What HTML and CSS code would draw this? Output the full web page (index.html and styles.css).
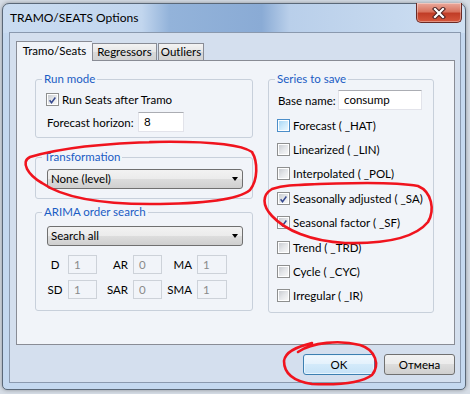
FILE: index.html
```html
<!DOCTYPE html>
<html>
<head>
<meta charset="utf-8">
<title>TRAMO/SEATS Options</title>
<link rel="stylesheet" href="styles.css">
</head>
<body>
<div class="window">
    <div class="titlebar">
        <span class="title">TRAMO/SEATS Options</span>
        <span class="close">
            <svg width="14" height="12" viewBox="0 0 14 12">
                <path d="M3 2 L11 10 M11 2 L3 10" stroke="#4a2020" stroke-width="4.2" stroke-linecap="square"/>
                <path d="M3 2 L11 10 M11 2 L3 10" stroke="#ffffff" stroke-width="2.2" stroke-linecap="square"/>
            </svg>
        </span>
    </div>

    <div class="client">
        <div class="tabs">
            <span class="tab active">Tramo/Seats</span>
            <span class="tab t-reg">Regressors</span>
            <span class="tab t-out">Outliers</span>
        </div>

        <div class="panel">
            <div class="col-left">
                <fieldset class="grp">
                    <legend>Run mode</legend>
                    <div class="gbody run-mode">
                        <div class="chk-row">
                            <span class="chk">
                                <svg width="11" height="11" viewBox="0 0 11 11"><path d="M2 5.2 L4.3 8.3 L9 1.8" fill="none" stroke="#34478f" stroke-width="1.8"/></svg>
                            </span>
                            Run Seats after Tramo
                        </div>
                        <div class="fld-row">
                            <span>Forecast horizon:</span>
                            <span class="edit horizon">8</span>
                        </div>
                    </div>
                </fieldset>

                <fieldset class="grp transform">
                    <legend>Transformation</legend>
                    <div class="gbody">
                        <div class="combo">None (level)<span class="arrow"></span></div>
                    </div>
                </fieldset>

                <fieldset class="grp arima">
                    <legend>ARIMA order search</legend>
                    <div class="gbody">
                        <div class="combo">Search all<span class="arrow"></span></div>
                        <div class="orders">
                            <span class="lbl first">D</span><span class="edit off">1</span>
                            <span class="lbl">AR</span><span class="edit off">0</span>
                            <span class="lbl">MA</span><span class="edit off">1</span>
                            <span class="lbl first">SD</span><span class="edit off">1</span>
                            <span class="lbl">SAR</span><span class="edit off">0</span>
                            <span class="lbl">SMA</span><span class="edit off">1</span>
                        </div>
                    </div>
                </fieldset>
            </div>

            <fieldset class="grp series">
                <legend>Series to save</legend>
                <div class="gbody">
                    <div class="fld-row base">
                        <span>Base name:</span>
                        <span class="edit basename">consump</span>
                    </div>
                    <div class="chk-list">
                        <div class="chk-row"><span class="chk hover"></span>Forecast ( _HAT)</div>
                        <div class="chk-row"><span class="chk"></span>Linearized ( _LIN)</div>
                        <div class="chk-row"><span class="chk"></span>Interpolated ( _POL)</div>
                        <div class="chk-row">
                            <span class="chk"><svg width="11" height="11" viewBox="0 0 11 11"><path d="M2 5.2 L4.3 8.3 L9 1.8" fill="none" stroke="#34478f" stroke-width="1.8"/></svg></span>
                            Seasonally adjusted ( _SA)
                        </div>
                        <div class="chk-row">
                            <span class="chk"><svg width="11" height="11" viewBox="0 0 11 11"><path d="M2 5.2 L4.3 8.3 L9 1.8" fill="none" stroke="#34478f" stroke-width="1.8"/></svg></span>
                            Seasonal factor ( _SF)
                        </div>
                        <div class="chk-row"><span class="chk"></span>Trend ( _TRD)</div>
                        <div class="chk-row"><span class="chk"></span>Cycle ( _CYC)</div>
                        <div class="chk-row"><span class="chk"></span>Irregular ( _IR)</div>
                    </div>
                </div>
            </fieldset>
        </div>

        <div class="buttons">
            <span class="btn default">OK</span>
            <span class="btn">Отмена</span>
        </div>
    </div>
</div>

<!-- hand drawn red marks over the dialog -->
<svg class="marks" width="470" height="394" viewBox="0 0 470 394">
    <path d="M160 142 C 110 143 60 148 30 157 C 20 162 28 175 42 183 C 62 197 100 204 150 204 C 200 204 238 200 250 190 C 258 180 258 162 252 152 C 240 144 200 141 150 142"
          fill="none" stroke="#f0141e" stroke-width="2.6" stroke-linecap="round"/>
    <path d="M300 185 C 340 183 390 181 418 186 C 432 192 435 210 428 222 C 415 238 385 244 345 243 C 310 241 285 230 272 216 C 262 205 262 195 272 189 C 285 185 295 185 320 184"
          fill="none" stroke="#f0141e" stroke-width="2.6" stroke-linecap="round"/>
    <path d="M298 352 C 312 342 340 340 360 345 C 376 350 380 365 372 375 C 360 384 335 385 312 384 C 292 381 284 372 284 361 C 285 352 296 347 312 343"
          fill="none" stroke="#f0141e" stroke-width="2.6" stroke-linecap="round"/>
</svg>
</body>
</html>
```

FILE: styles.css
```css
* {
    box-sizing: border-box;
}

body {
    margin: 0;
    width: 470px;
    height: 394px;
    overflow: hidden;
    position: relative;
    background: #d6dde6;
    font-family: Lato, "Noto Sans", sans-serif;
    font-size: 11.5px;
    color: #000;
}

.window {
    margin: 3px 0 0 2px;
    width: 464px;
    height: 387px;
    border: 1px solid #5a6878;
    border-radius: 7px 7px 5px 5px;
    padding: 0 4px 6px 6px;
    display: flex;
    flex-direction: column;
    background:
        linear-gradient(to right, #cadcf1 0, #c2d6ee 30%, #93b3da 36%, #8aabd5 56%, #b9cfea 62%, #c6d9ef 85%, #cfe0f2 100%) top / 100% 29px no-repeat,
        #c4d8ef;
    box-shadow: 0 0 4px rgba(0, 0, 0, 0.35);
}

.titlebar {
    height: 28px;
    display: flex;
    align-items: flex-start;
}

.title {
    margin: 6px 0 0 1px;
    line-height: 16px;
    font-size: 12px;
}

.close {
    margin: -1px -1px 0 auto;
    width: 46px;
    height: 20px;
    border: 1px solid #6a2a25;
    border-top: none;
    border-radius: 0 0 5px 5px;
    background: linear-gradient(#eaa99c 0, #d9745f 45%, #c13d27 55%, #d6573c 100%);
    display: flex;
    align-items: center;
    justify-content: center;
    box-shadow: inset 0 0 0 1px rgba(255, 255, 255, 0.35);
}

.client {
    flex: 1;
    border: 1px solid #8a99ae;
    background: #d4dfee;
    padding: 8px 5px 0 6px;
    display: flex;
    flex-direction: column;
}

/* tabs */
.tabs {
    height: 20px;
    margin-bottom: -1px;
    display: flex;
    align-items: flex-end;
    position: relative;
    z-index: 1;
}

.tab {
    height: 17px;
    margin-bottom: 1px;
    border: 1px solid #898c95;
    border-bottom: none;
    background: linear-gradient(#f3f3f3, #e6e6e6 50%, #d9d9d9 50%, #d3d3d3);
    display: flex;
    align-items: center;
    justify-content: center;
    line-height: 14px;
}

.tab.active {
    width: 76px;
    height: 20px;
    margin-bottom: 0;
    background: #f1f4f9;
    border-right: none;
    padding-bottom: 1px;
}

.t-reg {
    width: 65px;
}

.t-out {
    width: 46px;
    margin-left: 1px;
}

.panel {
    height: 285px;
    border: 1px solid #898c95;
    background: #f1f4f9;
    padding: 10px 0 0 18px;
    display: flex;
    gap: 15px;
}

/* group boxes */
.grp {
    margin: 0;
    padding: 0;
    border: 1px solid #c8d0db;
    border-radius: 3px;
    min-width: 0;
}

.grp legend {
    margin-left: 6px;
    padding: 0 2px;
    line-height: 16px;
    color: #1a5cc4;
}

.col-left {
    width: 218px;
    display: flex;
    flex-direction: column;
}

.gbody {
    padding: 6px 9px 11px 11px;
}

.gbody.run-mode {
    padding: 5px 0 5px 10px;
}

.transform {
    margin-top: 11px;
}

.transform .gbody {
    padding: 4px 9px 9px 11px;
}

.arima {
    margin-top: 5px;
}

.series {
    width: 166px;
    height: 242px;
}

.series .gbody {
    padding: 3px 0 0 8px;
}

/* rows */
.chk-row {
    display: flex;
    align-items: center;
    gap: 3px;
    line-height: 15px;
    white-space: nowrap;
}

.fld-row {
    display: flex;
    align-items: center;
    margin-top: 5px;
    padding-left: 1px;
    white-space: nowrap;
}

.fld-row.base {
    margin-top: 0;
    padding-left: 1px;
}

.chk-list {
    margin-top: 3px;
}

.chk-list .chk-row {
    height: 24.4px;
}

.chk {
    width: 13px;
    height: 13px;
    flex: none;
    border: 1px solid #8e8f8f;
    padding: 1px;
    display: flex;
    background-color: #fff;
    background-image: linear-gradient(135deg, #c9ccd1 0, #e4e6e9 50%, #f7f7f7 100%);
    background-size: 9px 9px;
    background-position: 1px 1px;
    background-repeat: no-repeat;
}

.chk.hover {
    border-color: #4c8ec9;
    background-image: linear-gradient(135deg, #a9d8f6 0, #cbe9fb 50%, #eaf7fe 100%);
}

.edit {
    height: 20px;
    border: 1px solid #e2e3ea;
    border-top-color: #abadb3;
    background: #fff;
    padding-left: 5px;
    line-height: 18px;
}

.horizon {
    width: 46px;
    margin-left: auto;
    margin-right: 68px;
}

.basename {
    width: 84px;
    margin-left: auto;
    margin-right: 11px;
}

.combo {
    height: 20px;
    border: 1px solid #707070;
    border-radius: 3px;
    background: linear-gradient(#f2f2f2, #ebebeb 50%, #dddddd 50%, #cfcfcf);
    padding-left: 3px;
    line-height: 18px;
    display: flex;
    align-items: center;
}

.arrow {
    margin: 0 4px 0 auto;
    width: 0;
    height: 0;
    border-left: 3.5px solid transparent;
    border-right: 3.5px solid transparent;
    border-top: 4px solid #000;
}

.orders {
    margin-top: 9px;
    display: grid;
    grid-template-columns: 16px 29px 26px 29px 25px 30px;
    grid-auto-rows: 19px;
    column-gap: 5px;
    row-gap: 6px;
    align-items: center;
}

.lbl {
    text-align: right;
    line-height: 15px;
}

.lbl.first {
    text-align: center;
}

.edit.off {
    height: 19px;
    border-color: #cdd2d9;
    background: #f1f4f9;
    color: #8a8a8a;
    line-height: 17px;
}

/* dialog buttons */
.buttons {
    margin-top: 9px;
    display: flex;
    justify-content: flex-end;
    gap: 9px;
}

.btn {
    width: 71px;
    height: 21px;
    border: 1px solid #707070;
    border-radius: 3px;
    background: linear-gradient(#f2f2f2, #ebebeb 50%, #dddddd 50%, #cfcfcf);
    display: flex;
    align-items: center;
    justify-content: center;
}

.btn.default {
    width: 72px;
    border-color: #3c7fb1;
    background: linear-gradient(#f1f8fe, #e3f1fc 50%, #d3eafa 50%, #c6e2f7);
    box-shadow: inset 0 0 0 1px #e6f4fd;
}

.marks {
    position: absolute;
    left: 0;
    top: 0;
    pointer-events: none;
}
```
